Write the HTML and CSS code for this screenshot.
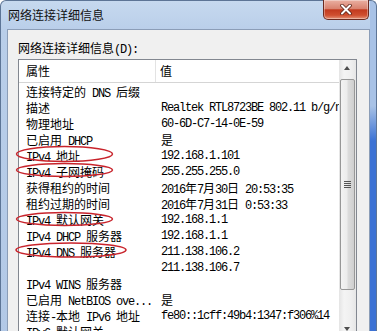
FILE: index.html
```html
<!DOCTYPE html>
<html lang="zh-CN">
<head>
    <meta charset="UTF-8">
    <meta name="viewport" content="width=device-width, initial-scale=1.0">
    <title>网络连接详细信息</title>
    <link rel="stylesheet" href="styles.css">
</head>
<body>
    <div class="window">
        <div class="titlebar">
            <span class="title">网络连接详细信息</span>
            <div class="close">
                <svg width="14" height="11" viewBox="0 0 14 11">
                    <path d="M3 1.5 L11 9.5 M11 1.5 L3 9.5" stroke="#5a2318" stroke-width="3.6" stroke-linecap="round"/>
                    <path d="M3 1.5 L11 9.5 M11 1.5 L3 9.5" stroke="#fff" stroke-width="2" stroke-linecap="round"/>
                </svg>
            </div>
        </div>

        <div class="client">
            <div class="label">网络连接详细信息<span class="en">(D):</span></div>

            <div class="listbox">
                <div class="list">
                    <!-- Header row -->
                    <div class="head">
                        <div class="c1">属性</div>
                        <div class="c2">值</div>
                    </div>

                    <div class="rows">
                        <div class="row"><div class="c1">连接特定的<span class="en"> DNS </span>后缀</div><div class="c2"></div></div>
                        <div class="row"><div class="c1">描述</div><div class="c2">Realtek RTL8723BE 802.11 b/g/n Wireless LAN 802.11n PCI-E NIC</div></div>
                        <div class="row"><div class="c1">物理地址</div><div class="c2">60-6D-C7-14-0E-59</div></div>
                        <div class="row"><div class="c1">已启用<span class="en"> DHCP</span></div><div class="c2"><span class="zh">是</span></div></div>
                        <div class="row"><div class="c1"><span class="en">IPv4 </span>地址</div><div class="c2">192.168.1.101</div></div>
                        <div class="row"><div class="c1"><span class="en">IPv4 </span>子网掩码</div><div class="c2">255.255.255.0</div></div>
                        <div class="row"><div class="c1">获得租约的时间</div><div class="c2">2016<span class="zh">年</span>7<span class="zh">月</span>30<span class="zh">日</span> 20:53:35</div></div>
                        <div class="row"><div class="c1">租约过期的时间</div><div class="c2">2016<span class="zh">年</span>7<span class="zh">月</span>31<span class="zh">日</span> 0:53:33</div></div>
                        <div class="row"><div class="c1"><span class="en">IPv4 </span>默认网关</div><div class="c2">192.168.1.1</div></div>
                        <div class="row"><div class="c1"><span class="en">IPv4 DHCP </span>服务器</div><div class="c2">192.168.1.1</div></div>
                        <div class="row"><div class="c1"><span class="en">IPv4 DNS </span>服务器</div><div class="c2">211.138.106.2</div></div>
                        <div class="row"><div class="c1"></div><div class="c2">211.138.106.7</div></div>
                        <div class="row"><div class="c1"><span class="en">IPv4 WINS </span>服务器</div><div class="c2"></div></div>
                        <div class="row"><div class="c1">已启用<span class="en"> NetBIOS ove...</span></div><div class="c2"><span class="zh">是</span></div></div>
                        <div class="row"><div class="c1">连接<span class="en">-</span>本地<span class="en"> IPv6 </span>地址</div><div class="c2">fe80::1cff:49b4:1347:f306%14</div></div>
                        <div class="row"><div class="c1"><span class="en">IPv6 </span>默认网关</div><div class="c2"></div></div>
                    </div>
                </div>

                <div class="scroll">
                    <div class="arrow up"></div>
                    <div class="thumb"><span class="grip"></span></div>
                    <div class="track"></div>
                    <div class="arrow down"></div>
                </div>
            </div>
        </div>
    </div>

    <!-- Red marks drawn over the list -->
    <svg class="marks" width="377" height="331" viewBox="0 0 377 331">
        <ellipse cx="64.5" cy="154" rx="48" ry="7.5"/>
        <ellipse cx="64.5" cy="170" rx="48" ry="6.5"/>
        <ellipse cx="64.5" cy="219" rx="48" ry="6.5"/>
        <ellipse cx="71" cy="250" rx="55" ry="7"/>
    </svg>
</body>
</html>
```

FILE: styles.css
```css
body{
    margin: 0;
    width: 377px;
    height: 331px;
    overflow: hidden;
    background: #fff;
    font-family: "Noto Sans CJK SC", sans-serif;
    font-size: 12px;
    color: #000;
}

/* SimSun-like half width latin: 6px per character */
.en{
    font-family: "Liberation Mono", monospace;
    font-size: 12px;
    letter-spacing: -1.2px;
}

.zh{
    font-family: "Noto Sans CJK SC", sans-serif;
    font-size: 12px;
    letter-spacing: 0;
}

div.window{
    height: 345px;
    padding: 0 6px;
    border: solid 1px #5d7596;
    border-bottom: 0;
    border-radius: 6px 6px 0 0;
    background:
        linear-gradient(#a8c2e6 0, #a8c2e6 105px, #3c72d4 140px, #3c72d4) right top / 6px 100% no-repeat,
        linear-gradient(#c6d9ef, #b9cee9 30px, #b2c8e6);
    background-origin: padding-box;
}

div.titlebar{
    display: flex;
    height: 28px;
}

.title{
    padding-left: 1px;
    line-height: 28px;
    color: #111;
}

div.close{
    width: 44px;
    height: 19px;
    margin: -1px 1px 0 auto;
    border: solid 1px #6b2a20;
    border-top: 0;
    border-radius: 0 0 5px 5px;
    background: linear-gradient(#eab0a2, #d98370 45%, #c23a1f 52%, #cf4f30 80%, #e49277);
    box-shadow: inset 0 0 0 1px rgba(255,255,255,0.35);
    display: flex;
    align-items: center;
    justify-content: center;
}

div.client{
    height: 100%;
    padding: 10px 12px 0 10px;
    border: solid 1px #8b9db7;
    background-color: #f0f0f0;
}

div.label{
    line-height: 16px;
    margin-bottom: 1px;
}

div.listbox{
    display: flex;
    height: 277px;
    border: solid 1px #828790;
    background-color: #fff;
}

div.list{
    flex: 1;
    overflow: hidden;
}

div.head{
    display: flex;
    height: 22px;
    line-height: 22px;
    border-bottom: solid 1px #d5d5d5;
}

div.head .c1{
    border-right: solid 1px #e3e3e3;
}

div.head .c2{
    padding-left: 4px;
    font-family: "Noto Sans CJK SC", sans-serif;
    letter-spacing: 0;
}

div.rows{
    padding-top: 1px;
}

div.row{
    display: flex;
    height: 16px;
    line-height: 16px;
}

.c1{
    width: 129px;
    flex: none;
    padding-left: 7px;
    white-space: nowrap;
}

div.row .c1{
    padding-right: 1px;
}

.c2{
    flex: 1;
    padding-left: 5px;
    white-space: nowrap;
    overflow: hidden;
    font-family: "Liberation Mono", monospace;
    letter-spacing: -1.2px;
}

/* Scrollbar */
div.scroll{
    width: 17px;
    display: flex;
    flex-direction: column;
    background: linear-gradient(to right, #e4e4e4, #f4f4f4 30%, #efefef 70%, #e6e6e6);
}

div.arrow{
    height: 17px;
    flex: none;
    position: relative;
}

div.arrow::after{
    content: "";
    position: absolute;
    left: 5px;
    top: 6px;
    border-left: 3.5px solid transparent;
    border-right: 3.5px solid transparent;
}

div.arrow.up::after{
    border-bottom: 4px solid #4d4d4d;
}

div.arrow.down::after{
    top: 7px;
    border-top: 4px solid #4d4d4d;
}

div.thumb{
    height: 209px;
    margin: 2px 1px 0 1px;
    border: solid 1px #979797;
    border-radius: 2px;
    background: linear-gradient(to right, #f3f3f3, #ececec 45%, #dcdcdc 55%, #cfcfcf);
    display: flex;
    align-items: center;
    justify-content: center;
}

.grip{
    width: 7px;
    height: 7px;
    background: repeating-linear-gradient(#555 0, #555 1px, transparent 1px, transparent 2px);
}

div.track{
    flex: 1;
}

svg.marks{
    position: absolute;
    top: 0;
    left: 0;
    pointer-events: none;
}

svg.marks ellipse{
    fill: none;
    stroke: #c8232b;
    stroke-width: 1.5;
}
```
